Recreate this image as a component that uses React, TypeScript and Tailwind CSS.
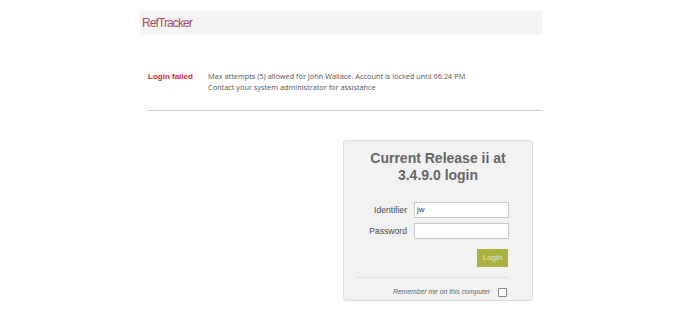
export default function App() {
  return (
    <div className="w-[680px] h-[310px] bg-white relative" style={{ fontFamily: "'Liberation Sans', Arial, sans-serif" }}>
      <div className="ml-[140px] w-[402px] pt-[11px]">
        <div className="h-[24px] bg-[#f4f4f4] flex items-center pl-[2px]">
          <span className="text-[12px] tracking-[-0.9px] text-[#a84a64] font-light">RefTracker</span>
        </div>
        <div className="flex pt-[36px] pl-[8px]">
          <div className="w-[60px] text-[8px] font-bold text-[#d22a3a] leading-[11px]">Login failed</div>
          <div className="text-[7.35px] text-[#555] leading-[11px]" style={{ fontFamily: "'Open Sans', sans-serif" }}>
            <div>Max attempts (5) allowed for John Wallace. Account is locked until 06:24 PM</div>
            <div>Contact your system administrator for assistance</div>
          </div>
        </div>
        <div className="ml-[7px] mt-[17px] h-px bg-[#cfcfcf]" />
      </div>
      <div className="ml-[343px] mt-[29px] w-[190px] h-[161px] bg-[#f2f2f2] border border-[#dcdcdc] rounded-[3px] flex flex-col items-center">
        <div className="mt-[9px] text-[14px] font-bold text-[#666] text-center leading-[17px]">
          Current Release ii at<br />3.4.9.0 login
        </div>
        <div className="mt-[18px] w-full flex flex-col gap-[5px]">
          <div className="flex items-center">
            <span className="w-[63px] text-right text-[8.6px] text-[#4a4a4a]">Identifier</span>
            <div className="ml-[7px] w-[95px] h-[16px] bg-white border border-[#c8c8c8] text-[8px] text-[#335] pl-[2px] flex items-center">jw</div>
          </div>
          <div className="flex items-center">
            <span className="w-[63px] text-right text-[8.6px] text-[#4a4a4a]">Password</span>
            <div className="ml-[7px] w-[95px] h-[16px] bg-white border border-[#c8c8c8]" />
          </div>
        </div>
        <div className="w-full flex justify-end pr-[24px] mt-[10px]">
          <div className="w-[31px] h-[18px] bg-[#a9b23e] text-[#e8ecc0] text-[8px] flex items-center justify-center">Login</div>
        </div>
        <div className="mt-[10px] w-[153px] h-px bg-[#e0e0e0] self-start ml-[12px]" />
        <div className="w-full flex justify-end items-center pr-[25px] mt-[9px]">
          <span className="text-[6.8px] italic text-[#666]">Remember me on this computer</span>
          <span className="ml-[8px] w-[9px] h-[9px] bg-white border border-[#888] rounded-[1px]" />
        </div>
      </div>
    </div>
  );
}
